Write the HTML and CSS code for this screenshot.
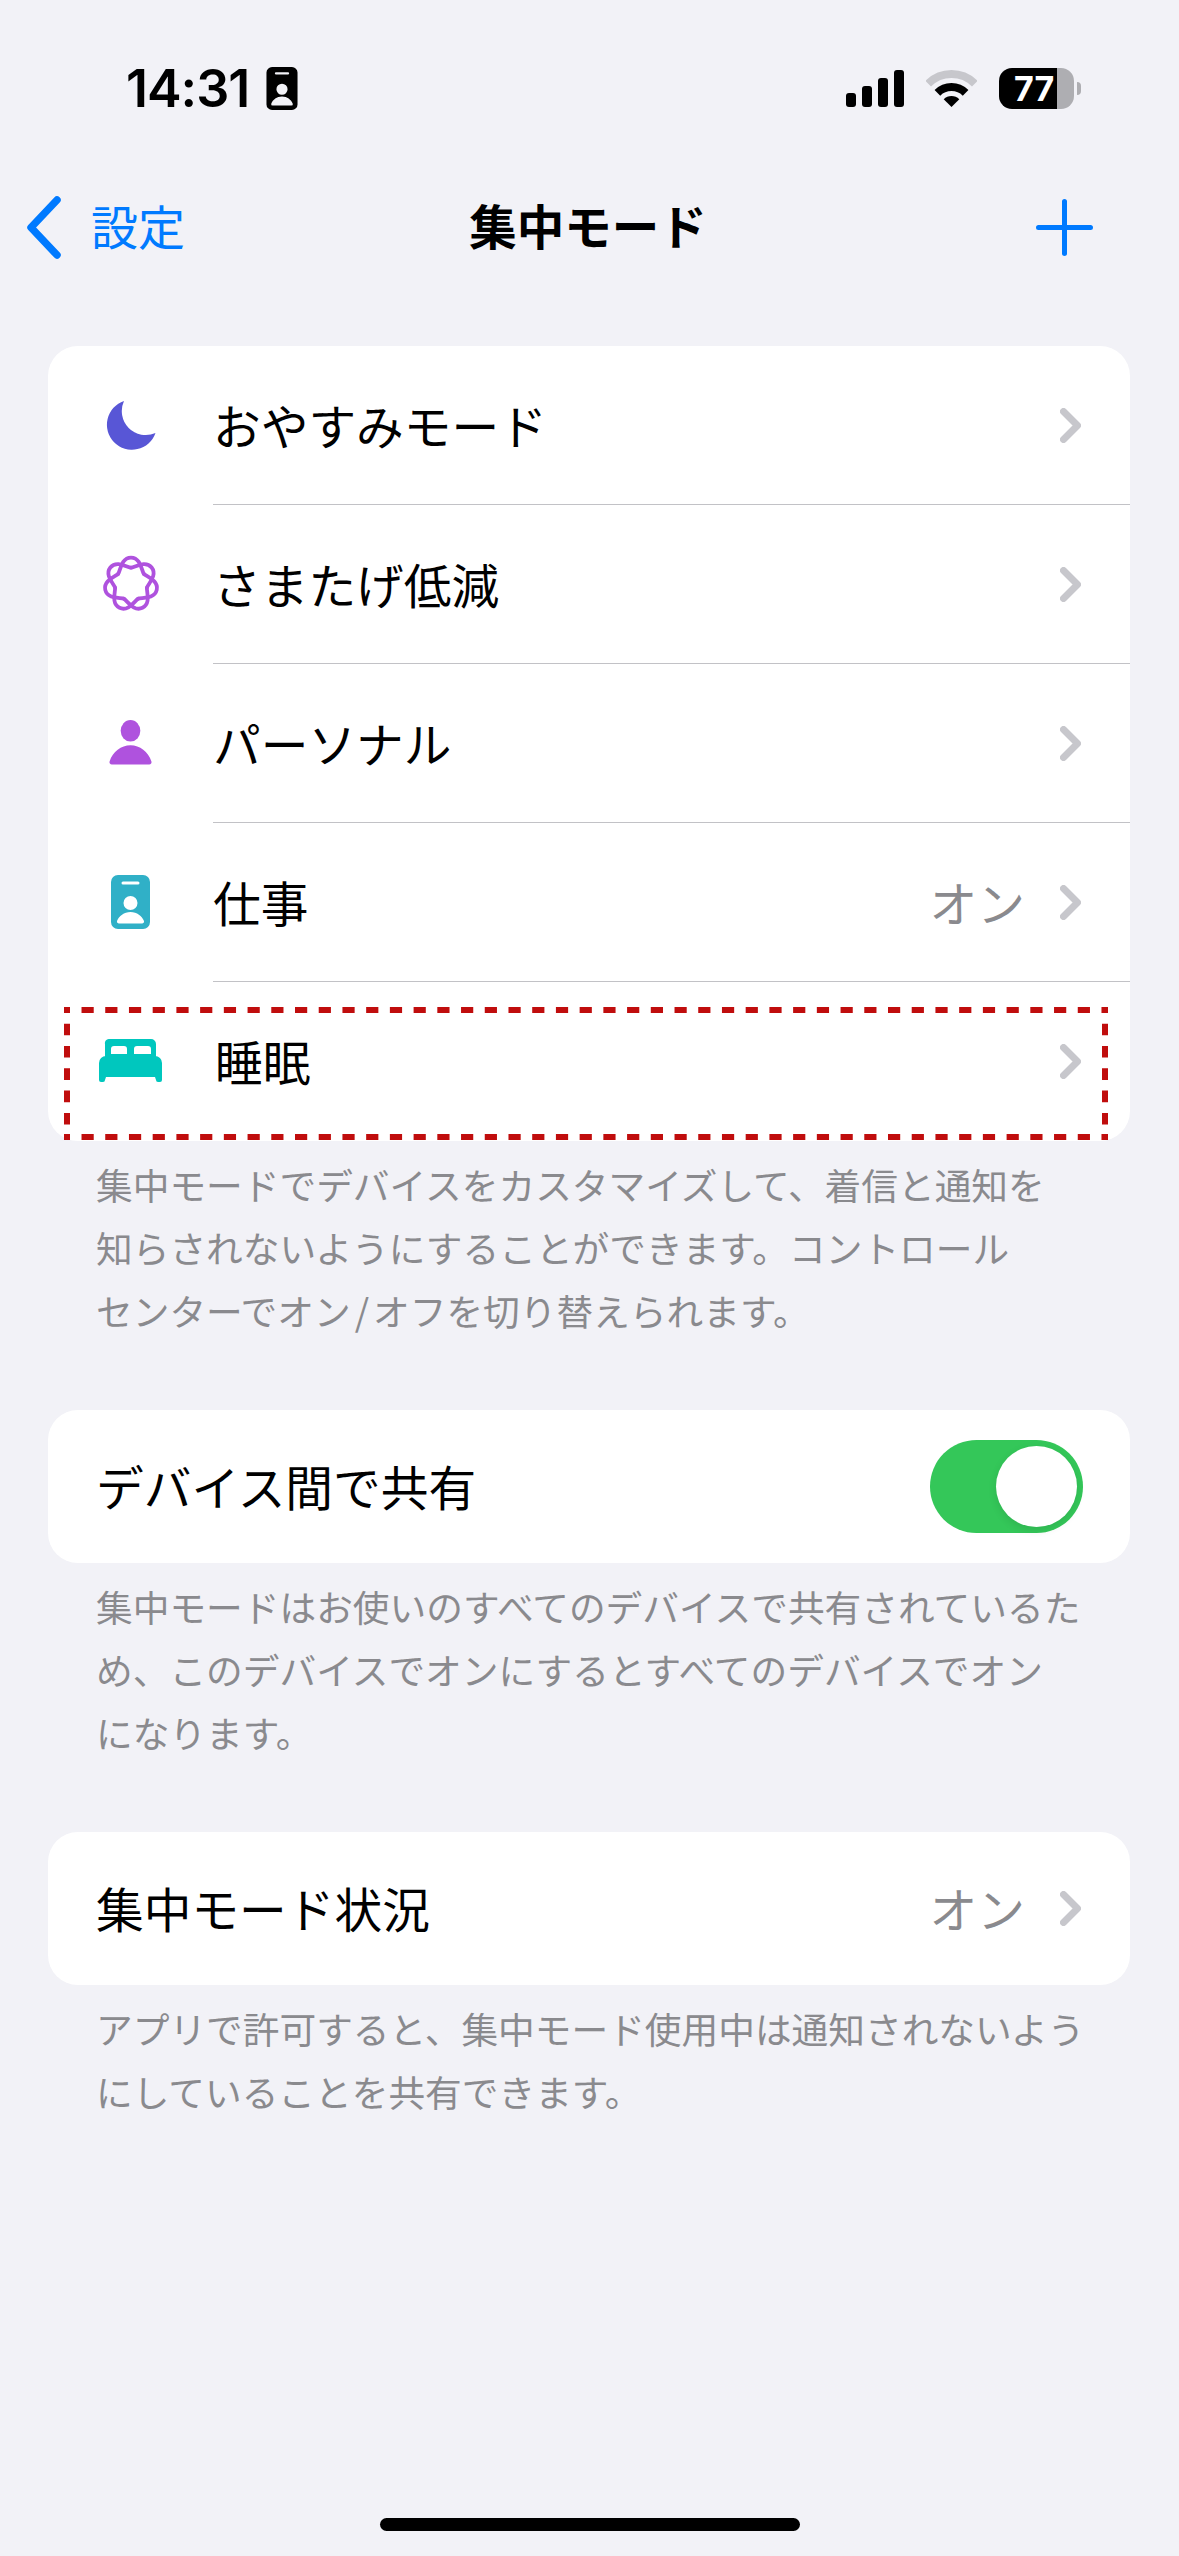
FILE: index.html
```html
<!DOCTYPE html>
<html lang="ja">
<head>
	<meta charset="UTF-8">
	<meta name="viewport" content="width=device-width, initial-scale=1.0">
	<title>集中モード</title>
	<link rel="stylesheet" href="styles.css">
</head>
<body>
	<div class="screen">
		<div class="status">
			<div class="status-left">
				<span class="time">14:31</span>
				<svg class="status-id" width="34" height="43" viewBox="0 0 39 54"><path fill-rule="evenodd" d="M7 0H32a7 7 0 0 1 7 7V47a7 7 0 0 1-7 7H7a7 7 0 0 1-7-7V7a7 7 0 0 1 7-7Z M12 6.5h15a1.5 1.5 0 0 1 0 3h-15a1.5 1.5 0 0 1 0-3Z M19.5 21a7 7 0 1 0 0 14a7 7 0 1 0 0-14Z M8 48.5H31a2 2 0 0 0 2-2.5C31 41 26 37 19.5 37S8 41 6 46a2 2 0 0 0 2 2.5Z"/></svg>
			</div>
			<div class="status-right">
				<svg width="58" height="37" viewBox="0 0 58 37"><rect x="0" y="23" width="10" height="14" rx="3"/><rect x="16" y="16" width="10" height="21" rx="3"/><rect x="32" y="8" width="10" height="29" rx="3"/><rect x="48" y="0" width="10" height="37" rx="3"/></svg>
				<svg width="51" height="37" viewBox="0 0 51 37"><path class="wifi-off" d="M2.2 13.7A33 33 0 0 1 48.8 13.7"/><path class="wifi-on" d="M11.4 22.9A20 20 0 0 1 39.6 22.9"/><path d="M25.5 37L17.7 29.2A11 11 0 0 1 33.3 29.2Z"/></svg>
				<div class="battery-wrap">
					<div class="battery">77</div>
					<div class="battery-nub"></div>
				</div>
			</div>
		</div>

		<div class="nav">
			<div class="nav-back">
				<svg width="36" height="65" viewBox="0 0 36 65"><path d="M32 5L6 32.5L32 60" /></svg>
				<span class="nav-back-text">設定</span>
			</div>
			<div class="nav-title">集中モード</div>
			<svg class="nav-plus" width="57" height="57" viewBox="0 0 57 57"><path d="M28.5 2.5V54.5M2.5 28.5H54.5"/></svg>
		</div>

		<div class="card">
			<div class="row">
				<div class="row-icon">
					<svg class="moon" width="50" height="50" viewBox="0 0 50 50"><path d="M18 1A25 25 0 1 0 49.5 33A24 24 0 0 1 18 1Z"/></svg>
				</div>
				<div class="row-body"><span class="label">おやすみモード</span><svg class="chev" width="21" height="35" viewBox="0 0 21 35"><path d="M3.5 3.5L17.5 17.5L3.5 31.5"/></svg></div>
			</div>
			<div class="row">
				<div class="row-icon">
					<svg class="orbit" width="60" height="60" viewBox="-30 -30 60 60">
						<defs><path id="lobe" d="M-12.8 -10.2C-10.7 -12.9 -9.9 -26.4 0 -26.4C9.9 -26.4 10.7 -12.9 12.8 -10.2"/></defs>
						<use href="#lobe"/>
						<use href="#lobe" transform="rotate(51.43)"/>
						<use href="#lobe" transform="rotate(102.86)"/>
						<use href="#lobe" transform="rotate(154.29)"/>
						<use href="#lobe" transform="rotate(205.71)"/>
						<use href="#lobe" transform="rotate(257.14)"/>
						<use href="#lobe" transform="rotate(308.57)"/>
					</svg>
				</div>
				<div class="row-body"><span class="label">さまたげ低減</span><svg class="chev" width="21" height="35" viewBox="0 0 21 35"><path d="M3.5 3.5L17.5 17.5L3.5 31.5"/></svg></div>
			</div>
			<div class="row">
				<div class="row-icon">
					<svg class="person" width="43" height="45" viewBox="0 0 46 48"><ellipse cx="23" cy="11.5" rx="10.5" ry="11.5"/><path d="M3 47.5H43a2.5 2.5 0 0 0 2.3-3.4C42 34 33 27 23 27S4 34 .7 44.1A2.5 2.5 0 0 0 3 47.5Z"/></svg>
				</div>
				<div class="row-body"><span class="label">パーソナル</span><svg class="chev" width="21" height="35" viewBox="0 0 21 35"><path d="M3.5 3.5L17.5 17.5L3.5 31.5"/></svg></div>
			</div>
			<div class="row">
				<div class="row-icon">
					<svg class="work" width="39" height="54" viewBox="0 0 39 54"><path fill-rule="evenodd" d="M7 0H32a7 7 0 0 1 7 7V47a7 7 0 0 1-7 7H7a7 7 0 0 1-7-7V7a7 7 0 0 1 7-7Z M12 6.5h15a1.5 1.5 0 0 1 0 3h-15a1.5 1.5 0 0 1 0-3Z M19.5 21a7 7 0 1 0 0 14a7 7 0 1 0 0-14Z M8 48.5H31a2 2 0 0 0 2-2.5C31 41 26 37 19.5 37S8 41 6 46a2 2 0 0 0 2 2.5Z"/></svg>
				</div>
				<div class="row-body"><span class="label">仕事</span><span class="value">オン</span><svg class="chev" width="21" height="35" viewBox="0 0 21 35"><path d="M3.5 3.5L17.5 17.5L3.5 31.5"/></svg></div>
			</div>
			<div class="row row-last">
				<div class="row-icon">
					<svg class="bed" width="63" height="43" viewBox="0 0 63 43"><path fill-rule="evenodd" d="M10 0H52a5 5 0 0 1 5 5V18H6V5a4 4 0 0 1 4-5Z M15 7a3 3 0 0 0-3 3V15H28V10a3 3 0 0 0-3-3Z M38 7a3 3 0 0 0-3 3V15H52V10a3 3 0 0 0-3-3Z"/><path d="M7 17H56a7 7 0 0 1 7 7V41a2 2 0 0 1-2 2H59a2 2 0 0 1-2-2L56 38H7L6 41a2 2 0 0 1-2 2H2a2 2 0 0 1-2-2V24a7 7 0 0 1 7-7Z"/></svg>
				</div>
				<div class="row-body"><span class="label label-sleep">睡眠</span><svg class="chev" width="21" height="35" viewBox="0 0 21 35"><path d="M3.5 3.5L17.5 17.5L3.5 31.5"/></svg></div>
				<svg class="highlight" width="1044" height="133" viewBox="0 0 1044 133">
					<path class="dash-h" d="M0 3H1044"/>
					<path class="dash-h" d="M0 130H1044"/>
					<path class="dash-v" d="M3 0V133"/>
					<path class="dash-v" d="M1041 0V133"/>
				</svg>
			</div>
		</div>
		<p class="note">集中モードでデバイスをカスタマイズして、着信と通知を<br>知らされないようにすることができます。コントロール<br>センターでオン<span class="slash">/</span>オフを切り替えられます。</p>

		<div class="card card-gap">
			<div class="row-plain">
				<span class="label">デバイス間で共有</span>
				<div class="toggle"><div class="knob"></div></div>
			</div>
		</div>
		<p class="note">集中モードはお使いのすべてのデバイスで共有されているた<br>め、このデバイスでオンにするとすべてのデバイスでオン<br>になります。</p>

		<div class="card card-gap">
			<div class="row-plain">
				<span class="label">集中モード状況</span>
				<span class="value">オン</span>
				<svg class="chev" width="21" height="35" viewBox="0 0 21 35"><path d="M3.5 3.5L17.5 17.5L3.5 31.5"/></svg>
			</div>
		</div>
		<p class="note">アプリで許可すると、集中モード使用中は通知されないよう<br>にしていることを共有できます。</p>

		<div class="home-bar"></div>
	</div>
</body>
</html>
```

FILE: styles.css
```css
*, *:before, *:after {
	box-sizing: border-box;
}
html, body {
	margin: 0;
	padding: 0;
}
body {
	background: #f2f2f7;
	color: #000;
	font-family: "Noto Sans CJK JP", "Noto Sans", sans-serif;
}
.screen {
	display: flex;
	flex-direction: column;
	height: 2556px;
	overflow: hidden;
}

/* status bar */
.status {
	display: flex;
	justify-content: space-between;
	align-items: center;
	height: 176px;
	padding: 0 98px 0 126px;
	flex: none;
}
.status-left {
	display: flex;
	align-items: center;
	gap: 16px;
}
.time {
	font-family: Inter, sans-serif;
	font-size: 52px;
	font-weight: 600;
	letter-spacing: -1px;
}
.status-right {
	display: flex;
	align-items: center;
	gap: 22px;
}
.wifi-off, .wifi-on {
	fill: none;
	stroke-width: 8;
}
.wifi-off {
	stroke: #c7c7cc;
}
.wifi-on {
	stroke: #000;
}
.battery-wrap {
	display: flex;
	align-items: center;
	gap: 3px;
}
.battery {
	width: 75px;
	height: 41px;
	border-radius: 13px;
	background: linear-gradient(to right, #000 58px, #aeaeb2 58px);
	color: #fff;
	font-family: Inter, sans-serif;
	font-size: 34px;
	font-weight: 700;
	line-height: 41px;
	padding-left: 15px;
}
.battery-nub {
	width: 4px;
	height: 13px;
	border-radius: 0 4px 4px 0;
	background: #aeaeb2;
}

/* nav */
.nav {
	position: relative;
	display: flex;
	justify-content: space-between;
	align-items: center;
	height: 102px;
	padding: 0 86px 0 21px;
	flex: none;
}
.nav-back {
	display: flex;
	align-items: center;
	gap: 30px;
	color: #007aff;
	font-size: 47px;
	margin-left: 4px;
}
.nav-back-text {
	padding-bottom: 6px;
}
.nav-back path, .nav-plus path {
	fill: none;
	stroke: #007aff;
	stroke-linecap: round;
	stroke-linejoin: round;
}
.nav-back path {
	stroke-width: 7.5;
}
.nav-plus path {
	stroke-width: 5;
}
.nav-title {
	font-size: 47.5px;
	font-weight: 700;
	position: absolute;
	left: 0;
	right: 0;
	text-align: center;
	padding: 0 3px 6px 0;
	pointer-events: none;
}

/* cards */
.card {
	margin: 68px 49px 0 48px;
	background: #fff;
	border-radius: 30px;
	flex: none;
}
.card-gap {
	margin-top: 66px;
}
.row {
	display: flex;
	height: 159px;
	position: relative;
}
.row-icon {
	width: 165px;
	flex: none;
	display: flex;
	align-items: center;
	justify-content: center;
	padding-bottom: 2px;
}
.row-body {
	flex: 1;
	display: flex;
	align-items: center;
	padding-right: 49px;
	border-bottom: 1px solid #c2c2c6;
}
.row-last .row-body {
	border-bottom: none;
}
.row-plain {
	display: flex;
	align-items: center;
	height: 153px;
	padding: 0 49px 0 48px;
}
.label {
	flex: 1;
	font-size: 47.7px;
	padding-bottom: 2px;
}
.label-sleep {
	margin-left: 2px;
}
.value {
	font-size: 47.7px;
	color: #8a8a8e;
	margin-right: 35px;
	padding-bottom: 2px;
}
.chev path {
	fill: none;
	stroke: #c7c7cc;
	stroke-width: 7;
	stroke-linecap: round;
	stroke-linejoin: round;
}
.moon path {
	fill: #5856d6;
}
.orbit use {
	fill: none;
	stroke: #af52de;
	stroke-width: 3.8;
	stroke-linecap: round;
}
.person {
	fill: #af52de;
}
.work {
	fill: #30b0c7;
}
.bed {
	fill: #00c7be;
}

/* the red marking box drawn over the last row */
.highlight {
	position: absolute;
	left: 16px;
	top: 25px;
}
.dash-h, .dash-v {
	fill: none;
	stroke: #c00d0d;
	stroke-width: 6;
}
.dash-h {
	stroke-dasharray: 12.2 11.52;
	stroke-dashoffset: 6.2;
}
.dash-v {
	stroke-dasharray: 11.6 10.7;
	stroke-dashoffset: 5.6;
}

/* footnotes */
.note {
	margin: 0;
	padding: 12px 40px 2px 96px;
	font-size: 36.7px;
	line-height: 63px;
	color: #8a8a8e;
	white-space: nowrap;
	flex: none;
}
.slash {
	margin: 0 4px;
}

/* toggle */
.toggle {
	width: 153px;
	height: 93px;
	border-radius: 47px;
	background: #34c759;
	padding: 6px;
	display: flex;
	justify-content: flex-end;
	margin: 0 -2px 0 auto;
}
.knob {
	width: 81px;
	height: 81px;
	border-radius: 50%;
	background: #fff;
	box-shadow: 0 3px 8px rgba(0, 0, 0, 0.1);
}

.home-bar {
	width: 420px;
	height: 13px;
	border-radius: 7px;
	background: #000;
	margin: auto auto 25px;
	flex: none;
}
```
